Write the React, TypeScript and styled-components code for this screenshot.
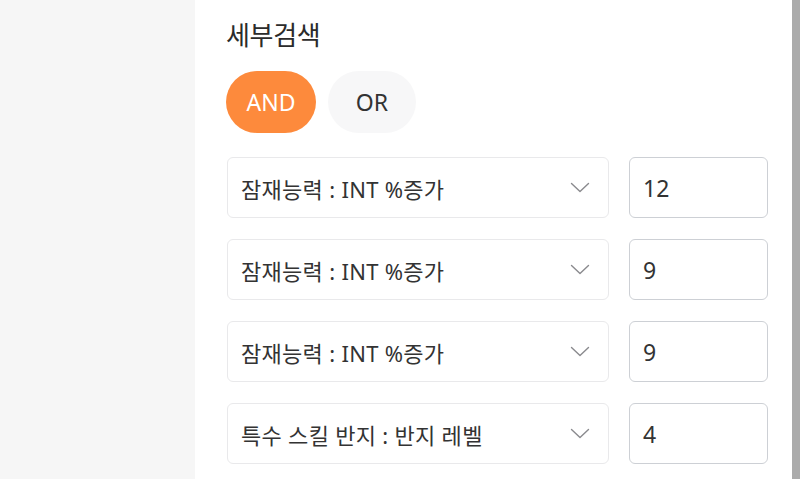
import React from "react";
import styled, { createGlobalStyle } from "styled-components";

const Global = createGlobalStyle`
  html, body { margin: 0; padding: 0; }
  body { font-family: "Noto Sans", "Noto Sans CJK KR", sans-serif; color: #333; }
`;

const Page = styled.div`
  display: flex;
  width: 800px;
  height: 479px;
  overflow: hidden;
  background: #ffffff;
`;

const Side = styled.div`
  width: 195px;
  flex-shrink: 0;
  background: #f6f6f6;
`;

const Main = styled.div`
  flex: 1;
  display: flex;
  flex-direction: column;
  padding: 14px 24px 0 31px;
`;

const Scrollbar = styled.div`
  width: 8px;
  flex-shrink: 0;
  background: #ababab;
`;

const Title = styled.h2`
  margin: 0;
  font-family: "Noto Sans CJK KR", sans-serif;
  font-size: 26px;
  font-weight: 400;
  line-height: 40px;
  color: #2b2b2b;
  letter-spacing: -0.3px;
`;

const Toggle = styled.div`
  display: flex;
  gap: 12px;
  margin-top: 17px;
`;

const Pill = styled.button<{ $active?: boolean }>`
  height: 62px;
  width: ${(p) => (p.$active ? 90 : 88)}px;
  border: none;
  border-radius: 31px;
  background: ${(p) => (p.$active ? "#fd8a3c" : "#f7f7f8")};
  color: ${(p) => (p.$active ? "#ffffff" : "#333333")};
  font-family: "Noto Sans", sans-serif;
  font-size: 23px;
  font-weight: 400;
  padding: 0;
`;

const Rows = styled.div`
  display: flex;
  flex-direction: column;
  gap: 21px;
  margin-top: 24px;
`;

const Row = styled.div`
  display: flex;
  gap: 20px;
  padding-left: 1px;
`;

const Select = styled.div`
  width: 382px;
  height: 61px;
  box-sizing: border-box;
  border: 1px solid #e9e9eb;
  border-radius: 6px;
  display: flex;
  align-items: center;
  justify-content: space-between;
  padding: 0 18px 0 13px;
  font-family: "Noto Sans", "Noto Sans CJK KR", sans-serif;
  font-size: 22px;
  letter-spacing: 0.3px;
  color: #333;
`;

const NumInput = styled.div`
  width: 139px;
  height: 61px;
  box-sizing: border-box;
  border: 1.5px solid #cdd0d5;
  border-radius: 6px;
  display: flex;
  align-items: center;
  padding-left: 13px;
  font-family: "Noto Sans", sans-serif;
  font-size: 23px;
  color: #333;
`;

const Chevron = () => (
  <svg width="20" height="12" viewBox="0 0 20 12" fill="none">
    <path d="M1.5 1.5 L10 9.5 L18.5 1.5" stroke="#8a8a8e" strokeWidth="1.4" strokeLinecap="round" strokeLinejoin="round" />
  </svg>
);

const rows = [
  { label: "잠재능력 : INT %증가", value: "12" },
  { label: "잠재능력 : INT %증가", value: "9" },
  { label: "잠재능력 : INT %증가", value: "9" },
  { label: "특수 스킬 반지 : 반지 레벨", value: "4" },
];

export default function App() {
  return (
    <>
      <Global />
      <Page>
        <Side />
        <Main>
          <Title>세부검색</Title>
          <Toggle>
            <Pill $active>AND</Pill>
            <Pill>OR</Pill>
          </Toggle>
          <Rows>
            {rows.map((r, i) => (
              <Row key={i}>
                <Select>
                  <span>{r.label}</span>
                  <Chevron />
                </Select>
                <NumInput>{r.value}</NumInput>
              </Row>
            ))}
          </Rows>
        </Main>
        <Scrollbar />
      </Page>
    </>
  );
}
